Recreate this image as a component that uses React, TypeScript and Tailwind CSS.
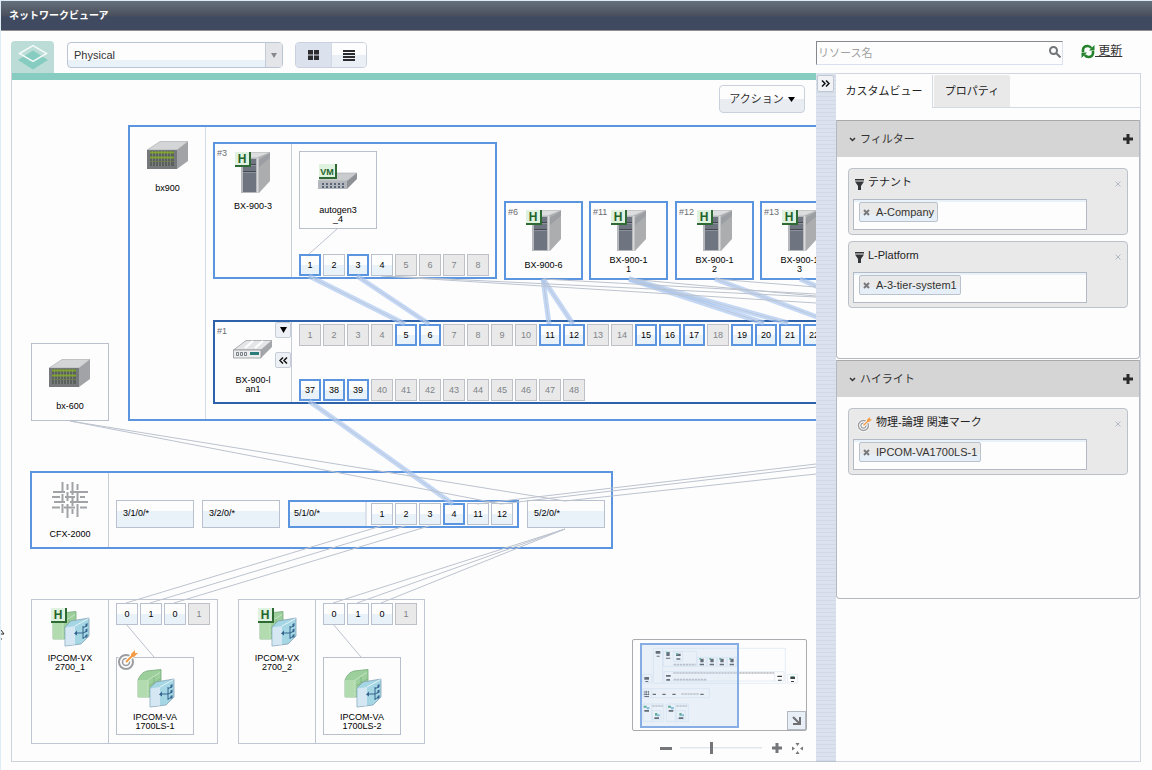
import { useState } from "react";
import type { ReactNode } from "react";
import clsx from "clsx";

type PortState = "on" | "off" | "active";

const FONT = "font-['Liberation_Sans','Noto_Sans_CJK_JP',sans-serif]";

// switch ports that carry a highlighted link
const SWITCH_ACTIVE = [5, 6, 11, 12, 15, 16, 17, 19, 20, 21, 22, 37, 38, 39];

const THIN_LINKS = [
    [325, 149, 297, 174],
    [58, 341, 489, 424],
    [58, 341, 553, 421],
    [465, 424, 804, 384],
    [489, 424, 804, 387],
    [553, 421, 804, 394],
    [369, 446, 114, 523],
    [393, 446, 138, 523],
    [417, 446, 162, 523],
    [553, 449, 321, 523],
    [553, 449, 345, 523],
    [553, 449, 369, 523],
    [114, 544, 142, 577],
    [321, 544, 349, 577],
    [373, 196, 804, 217],
    [369, 196, 804, 223],
    [531, 199, 804, 214],
    [617, 199, 804, 216],
    [703, 199, 804, 207],
];

const THICK_LINKS = [
    [297, 196, 393, 244],
    [345, 196, 417, 244],
    [531, 199, 537, 244],
    [531, 199, 561, 244],
    [617, 199, 752, 243],
    [617, 199, 776, 243],
    [703, 199, 824, 244],
    [788, 199, 850, 226],
    [297, 321, 441, 424],
];

function Badge({ text }: { text: string }) {
    const wide = text.length > 1;
    return (
        <g>
            <rect x="0" y="0" width={wide ? 18 : 16} height="15" fill="#2f6a35" />
            <rect x="0" y="0" width={wide ? 16 : 14} height="13" fill="#dff1df" />
            <text x={wide ? 8 : 7} y="11" textAnchor="middle" fontSize={wide ? 9 : 12} fontWeight="bold" fill="#1f6429">{text}</text>
        </g>
    );
}

function ChassisIcon() {
    return (
        <svg width="42" height="29" viewBox="0 0 42 29">
            <path d="M0 9 13 0.500H41L30 9Z" fill="#d3d5d7" stroke="#a4a7aa" strokeWidth="0.600" />
            <path d="M30 9 41 0.500V20L30 28Z" fill="#a1a3a6" />
            <rect x="0" y="9" width="30" height="19" fill="#75797b" />
            <rect x="3" y="10" width="24" height="15" fill="#5a615d" />
            <path d="M5.500 10v15M8.500 10v15M11.500 10v15M14.500 10v15M17.500 10v15M20.500 10v15M23.500 10v15" stroke="#888e8c" strokeWidth="0.700" />
            <path d="M3 11.500h24M3 16.500h24" stroke="#86ad25" strokeWidth="2" opacity="0.850" />
            <path d="M3 20.500h24" stroke="#6f7c52" />
        </svg>
    );
}

function TowerIcon() {
    return (
        <svg width="36" height="42" viewBox="0 0 36 42">
            <path d="M7 6 17 0.500H35L22 6Z" fill="#dcdddf" stroke="#a9abae" strokeWidth="0.600" />
            <path d="M22 6 35 0.500V29L24 41H22Z" fill="#abadaf" />
            <path d="M24 8 35 1V6L24 15Z" fill="#8c8f97" opacity="0.500" />
            <path d="M22.500 6V41" stroke="#d8d9db" strokeWidth="2" />
            <rect x="6" y="6" width="16" height="35" fill="#b6b8bb" />
            <rect x="8" y="7" width="13" height="33" fill="#6e7581" />
            <path d="M8 12.500h13M8 19.500h13" stroke="#45484e" />
            <path d="M8 13.500h13M8 20.500h13" stroke="#8b929d" />
            <Badge text="H" />
        </svg>
    );
}

function VmIcon() {
    return (
        <svg width="40" height="26" viewBox="0 0 40 26">
            <path d="M0 17 10 9H39L29 17Z" fill="#c9cbce" stroke="#a9acb0" strokeWidth="0.600" />
            <path d="M29 17 39 9V15L29 25Z" fill="#8e9196" />
            <rect x="0" y="17" width="29" height="8" fill="#b4b8bd" />
            <path d="M4 20h22M4 23h22" stroke="#3d4a63" strokeWidth="1.500" strokeDasharray="2 2" />
            <g transform="translate(1 0)"><Badge text="VM" /></g>
        </svg>
    );
}

function SwitchIcon() {
    return (
        <svg width="40" height="20" viewBox="0 0 40 20">
            <path d="M0.500 10 13 0.500H39L28 10Z" fill="#e3e5e7" stroke="#9da0a5" strokeWidth="0.800" />
            <path d="M12 8 20 1M22 8 30 1" stroke="#fff" strokeWidth="2" />
            <path d="M28 10 39 0.500V7L28 18Z" fill="#a3a6aa" />
            <path d="M0.500 10H28V18H0.500Z" fill="#eceded" stroke="#8f9398" strokeWidth="0.800" />
            <path d="M3.500 12.500h2v3h-2zM7.500 12.500h2v3h-2zM11.500 12.500h2v3h-2z" fill="none" stroke="#5d656f" strokeWidth="0.800" />
            <rect x="17" y="12" width="9" height="3" fill="#2d7c7c" />
        </svg>
    );
}

function FabricIcon() {
    return (
        <svg width="36" height="36" viewBox="0 0 36 36" fill="none" stroke="#a1a3a7" strokeWidth="2">
            <path d="M10.500 0v9M10.500 12v8M10.500 22v9M15.500 2v6M15.500 10v9M15.500 22v14M20.500 0v13M20.500 16v8M20.500 27v5M25.500 2v6M25.500 11v8M25.500 22v13" />
            <path d="M1 10h12M18 10h18M0 15h8M13 15h10M28 15h5M2 20h11M18 20h18M0 25.500h8M12 25.500h11M28 25.500h7" />
        </svg>
    );
}

function FirewallIcon({ host = false }: { host?: boolean }) {
    return (
        <svg width="39" height="40" viewBox="0 0 39 40">
            <g transform={host ? "translate(1 3)" : "translate(1 0)"}>
                <path d="M1 11C3 6 6 3 10 2L24 0.500V21L12 28H1Z" fill="#9ccf9b" stroke="#74a878" strokeWidth="0.800" />
                <path d="M1 11H11V28H1Z" fill="#b2dcb0" />
                <path d="M11 11 23 3.500M11 11V28" fill="none" stroke="#c5e5c3" />
                <path d="M12 17 23.500 10M12 22.500 23.500 16M17 8v6M19 13v5" fill="none" stroke="#79b17b" strokeWidth="0.800" />
            </g>
            <path d="M14 19 20 13 38 10V28L30 36 14 38Z" fill="#a5d6e3" stroke="#86a2b5" strokeWidth="0.800" />
            <path d="M14.500 19.500 24 18V36.500L14.500 37.500Z" fill="#d6e7f4" />
            <path d="M24 18 37.500 10.500" stroke="#e6f4fa" />
            <path d="M26 25h6M32 18v13M32 19.500l4-1.500M32 25l4-2M32 30l4-2" fill="none" stroke="#35648e" />
            <path d="M26 22.500v5l-3-2z" fill="#35648e" />
            <path d="M34.500 16l2-1v3l-2 1zM34.500 21.500l2-1v3l-2 1zM34.500 27l2-1v3l-2 1z" fill="#35648e" />
            {host && <Badge text="H" />}
        </svg>
    );
}

function TargetIcon({ className }: { className?: string }) {
    return (
        <svg className={className} viewBox="0 0 21 21" fill="none">
            <circle cx="9" cy="12" r="9" fill="#fff" />
            <circle cx="9" cy="12" r="7" stroke="#9b9da0" strokeWidth="2" />
            <circle cx="9" cy="12" r="3.500" stroke="#9b9da0" strokeWidth="1.600" />
            <path d="M9 12 17 4" stroke="#fff" strokeWidth="4" />
            <path d="M9 12 16 5" stroke="#f49b45" strokeWidth="2" />
            <path d="M14 4 18 0V3H21L17 7H14Z" fill="#f49b45" />
        </svg>
    );
}

function Port({ label, state = "on" }: { label: number; state?: PortState }) {
    return (
        <button
            className={clsx(
                "flex size-[22px] shrink-0 items-center justify-center text-[9px] leading-none",
                state === "active" && "border-2 border-[#5b94df] bg-linear-to-b from-[#fdfdfd] from-50% to-[#e9f1f9] to-50% text-black",
                state === "on" && "border border-[#b9c1ce] bg-linear-to-b from-[#fdfdfd] from-50% to-[#e9f1f9] to-50% text-black",
                state === "off" && "border border-[#bdc0c6] bg-[#e9e9e9] text-[#808388]"
            )}
        >
            {label}
        </button>
    );
}

function Label({ children }: { children: ReactNode }) {
    return <span className="text-center text-[9px] leading-[9px] whitespace-pre-line text-black">{children}</span>;
}

function Blade({ slot, name, className }: { slot: string; name: string; className: string }) {
    return (
        <div className={clsx("absolute flex size-[79px] flex-col items-center gap-1 border-2 border-[#5b94df] pt-[7px]", className)}>
            <span className="absolute top-[5px] left-[2px] text-[9px] leading-[9px] text-[#6a6d72]">{slot}</span>
            <TowerIcon />
            <div className="flex h-[18px] items-center">
                <Label>{name}</Label>
            </div>
        </div>
    );
}

function Slot({ name }: { name: string }) {
    return (
        <div className="flex h-7 w-[78px] items-center border border-[#b9c1ce] bg-linear-to-b from-[#fdfdfd] from-40% to-[#e9f1f9] to-40% pl-1.5 text-[9px] text-black">
            {name}
        </div>
    );
}

function Ipcom({ host, guest, marked, className }: { host: string; guest: string; marked?: boolean; className: string }) {
    return (
        <div className={clsx("absolute flex h-[145px] w-[187px] border border-[#c0c7d3]", className)}>
            <div className="flex w-[77px] flex-col items-center gap-1.5 border-r border-[#c0c7d3] pt-2">
                <FirewallIcon host />
                <Label>{host}</Label>
            </div>
            <div className="flex flex-col gap-8 pt-[3px] pl-[7px]">
                <div className="flex gap-0.5">
                    <Port label={0} />
                    <Port label={1} />
                    <Port label={0} />
                    <Port label={1} state="off" />
                </div>
                <div className="relative flex size-[78px] flex-col items-center gap-1 border border-[#b9c0cb] pt-[11px]">
                    {marked && <TargetIcon className="absolute -top-2 left-0 size-[21px]" />}
                    <FirewallIcon />
                    <Label>{guest}</Label>
                </div>
            </div>
        </div>
    );
}

function Minimap() {
    const blades = [232, 262, 292, 322];
    return (
        <div className="relative h-[92px] w-[175px] rounded-xs border border-[#a9abae] bg-[#fdfdfd]">
            <svg className="block size-full" viewBox="39 30 519 270">
                <g fill="none" stroke="#dbe6f1" strokeWidth="2">
                    <path d="M100 55h396v105H100zM128 55v105M130 64h100v45H130zM132 125h360v28H132zM464 125v28M69 133h26v26H69zM502 133h30v26h-30zM69 176h199v27H69zM95 176v27M69 222h62v52H69zM95 222v52M139 222h66v52h-66zM166 222v52M97 242h26v26H97zM170 242h26v26h-26zM160 66h28v28h-28z" />
                    {blades.map((x) => <path key={x} d={`M${x} 82h27v27h-27z`} />)}
                </g>
                <g stroke="#9a9da3" strokeWidth="5" strokeDasharray="7 2">
                    <path d="M161 104h66M160 129h302M161 149h100M184 192h52M97 228h32M169 228h32" opacity="0.700" />
                </g>
                <g fill="#3f444a">
                    <path d="M107 63h14v8h-14zM110 77h9v3h-9zM139 66h10v12h-10zM138 83h13v3h-13zM168 71h14v7h-14zM169 85h12v4h-12zM138 135h14v5h-14zM139 147h11v5h-11zM73 141h14v8H73zM76 153h9v3h-9zM472 137h14v4h-14zM474 149h11v3h-11zM511 140h14v7h-14zM513 153h9v3h-9z" />
                    <path d="M74 182h2v14h-2zM79 182h2v14h-2zM84 182h2v14h-2zM71 185h17v2H71zM71 192h17v2H71zM73 198h14v3H73zM98 191h10v4H98zM127 191h10v4h-10zM157 191h10v4h-10zM241 191h10v4h-10z" />
                    <path d="M73 240h14v5H73zM146 240h14v5h-14zM103 262h14v5h-14zM176 262h14v5h-14z" />
                    {blades.map((x) => <path key={x} d={`M${x + 9} 86h10v11h-10zM${x + 7} 101h13v5h-13z`} />)}
                </g>
                <g fill="#3c9d77">
                    <path d="M71 227h9v6h-9zM144 227h9v6h-9zM138 65h5v5h-5zM168 70h6v5h-6zM105 249h7v8h-7zM178 249h7v8h-7zM512 138h11v2h-11z" />
                    {blades.map((x) => <path key={x} d={`M${x + 6} 84h5v5h-5z`} />)}
                </g>
                <path d="M80 231h8v7h-8zM153 231h8v7h-8zM111 253h8v6h-8zM184 253h8v6h-8z" fill="#6ab3cd" />
            </svg>
            <div className="absolute top-[3px] left-[7px] h-[85px] w-[99px] border-2 border-[#86aee4] bg-[#bcd3f0]/30" />
            <button aria-label="minimap" className="absolute right-0 bottom-0 flex size-[19px] items-center justify-center border border-[#b5bac2] bg-[#e9eff6]">
                <svg width="9" height="9" viewBox="0 0 9 9" fill="none" stroke="#6e7073" strokeWidth="2"><path d="M1 1 7 7M8 1V8H1" /></svg>
            </button>
        </div>
    );
}

function FunnelIcon() {
    return (
        <svg width="9" height="11" viewBox="0 0 9 11" fill="#343638">
            <path d="M0 0h9v1.500H0zM0 2.500h9L6 7v4H3V7z" />
        </svg>
    );
}

function PlusIcon({ className }: { className?: string }) {
    return <svg className={className} width="10" height="10" viewBox="0 0 10 10"><path d="M5 0v10M0 5h10" stroke="currentColor" strokeWidth="3" /></svg>;
}

function FilterCard({ id, icon, title, tag }: { id: string; icon: ReactNode; title: string; tag: string }) {
    return (
        <div className="h-[67px] rounded-sm border border-[#bcc1c9] bg-[#e9e9e9] pl-1">
            <div className="flex h-[30px] items-center gap-1 pr-1 pl-0.5">
                {icon}
                <label htmlFor={id} className="-mt-1 text-[11px] text-[#222]">{title}</label>
                <button aria-label="close" className="mr-0.5 ml-auto">
                    <svg width="6" height="6" viewBox="0 0 6 6" stroke="#b3b9c4"><path d="M0.500 0.500 5.500 5.500M5.500 0.500 0.500 5.500" /></svg>
                </button>
            </div>
            <div className="flex h-[31px] w-[234px] items-start border border-[#b3bac6] bg-[#fdfdfd] px-[5px] pt-0.5 shadow-[inset_0_2px_#e9f1f9]">
                <span className="flex h-5 shrink-0 items-center gap-1.5 rounded-xs border border-[#bac2cd] bg-linear-to-b from-[#e9e9e9] from-60% to-[#e6eff7] to-60% px-[3px] text-[11px] text-[#333]">
                    <button aria-label="remove">
                        <svg width="7" height="7" viewBox="0 0 7 7" stroke="#77797c" strokeWidth="2"><path d="M1 1 6 6M6 1 1 6" /></svg>
                    </button>
                    {tag}
                </span>
                <input id={id} className="h-5 min-w-0 flex-1 bg-transparent text-[11px] outline-none" />
            </div>
        </div>
    );
}

function PanelHeader({ title }: { title: string }) {
    return (
        <div className="flex h-[37px] items-center gap-1 border-t border-[#a9a9a9] bg-[#d5d5d5] pr-1.5 pl-3 text-[11px] text-[#333]">
            <svg width="7" height="5" viewBox="0 0 7 5" fill="none" stroke="#333" strokeWidth="1.500"><path d="M1 1 3.500 3.500 6 1" /></svg>
            <h2>{title}</h2>
            <button aria-label="add" className="ml-auto"><PlusIcon className="text-[#2b2b2b]" /></button>
        </div>
    );
}

export default function App() {
    const [view, setView] = useState("Physical");
    const [zoom, setZoom] = useState(38);

    return (
        <div className={clsx("relative flex min-h-screen flex-col overflow-hidden border-t border-l border-[#deedf5] bg-[#fdfdfd] pb-2 text-[#333]", FONT)}>
            <header className="flex h-[30px] items-center border-b border-[#8f8d8d] bg-linear-to-b from-[#66717e] via-[#4a505c] via-50% to-[#3f4a61] to-55% px-2">
                <h1 className="text-[10px] font-bold text-white">ネットワークビューア</h1>
            </header>

            <div className="flex h-[42px] pr-[11px] pl-2.5">
                <div className="mt-2.5 flex w-[43px] items-center justify-center rounded-t bg-[#bcddd7]">
                    <svg width="32" height="26" viewBox="0 0 32 26">
                        <path d="M1 16 16 6.500 31 16 16 25.500Z" fill="#86ccc1" />
                        <path d="M2.500 9.500 16 1.500 29.500 9.500 16 17.500Z" fill="none" stroke="#f2faf8" strokeWidth="1.500" />
                    </svg>
                </div>
                <div className="relative mt-[11px] ml-[13px] h-[26px] w-[216px]">
                    <select
                        aria-label="view"
                        value={view}
                        onChange={(e) => setView(e.target.value)}
                        className="size-full appearance-none rounded-sm border border-[#bbc4d3] bg-linear-to-b from-[#fdfdfd] from-70% to-[#e9f1f9] to-70% px-1.5 text-[11px] text-[#333]"
                    >
                        <option>Physical</option>
                        <option>Logical</option>
                    </select>
                    <span className="pointer-events-none absolute inset-y-px right-px flex w-[17px] items-center justify-center border-l border-[#c5ccd9] bg-[#e3e5e9]">
                        <svg width="6" height="5" viewBox="0 0 6 5" fill="#85888d"><path d="M0 0h6L3 5z" /></svg>
                    </span>
                </div>
                <div className="mt-[11px] ml-3 flex h-[26px] w-[72px] overflow-hidden rounded-sm border border-[#c9d1de]">
                    <button aria-label="map" className="flex flex-1 items-center justify-center bg-[#dbe2ed]">
                        <svg width="11" height="10" viewBox="0 0 11 10" fill="#2c2c2e"><path d="M0 0h5v4.500H0zM6 0h5v4.500H6zM0 5.500h5V10H0zM6 5.500h5V10H6z" /></svg>
                    </button>
                    <button aria-label="list" className="flex flex-1 items-center justify-center border-l border-[#d3dae5] bg-linear-to-b from-[#fdfdfd] from-50% to-[#e9eff5] to-50%">
                        <svg width="12" height="11" viewBox="0 0 12 11" fill="#2c2c2e"><path d="M0 0h12v2H0zM0 3h12v2H0zM0 6h12v2H0zM0 9h12v2H0z" /></svg>
                    </button>
                </div>
                <div className="ml-auto flex w-[325px] items-start">
                    <div className="relative mt-[9px] h-6 w-[247px]">
                        <input
                            aria-label="search"
                            placeholder="リソース名"
                            className="size-full border border-[#d9e1f0] border-t-[#85898f] border-l-[#85898f] bg-[#fdfdfd] pr-6 pl-px text-[11px] outline-none placeholder:text-[#a0a0a0]"
                        />
                        <svg className="absolute top-1.5 right-0.5" width="12" height="12" viewBox="0 0 12 12" fill="none" stroke="#717478" strokeWidth="2"><circle cx="4.500" cy="4.500" r="3.500" /><path d="m7 7 4.500 4.500" /></svg>
                    </div>
                    <a href="#" className="mt-3 ml-[18px] flex items-center text-[12px] leading-4 text-[#333] underline">
                        <svg width="14" height="15" viewBox="0 0 14 15" fill="none" stroke="#23822b" strokeWidth="2.600">
                            <path d="M2 8V6C2 3.500 4 2 6.500 2c1.800 0 2.800.700 3.800 2" />
                            <path d="M12 7v2c0 2.500-2 4-4.500 4-1.800 0-2.800-.700-3.800-2" />
                            <path d="M8 6.500h5.500V1z M6 8.500H0.500V14z" fill="#23822b" stroke="none" />
                        </svg>
                        <span>&nbsp;更新</span>
                    </a>
                </div>
            </div>

            <main className="flex flex-1 pr-[11px] pl-2.5">
                <section className="relative min-h-[680px] min-w-0 flex-1 overflow-hidden border-b border-l border-[#ced2d9]">
                    <div className="h-[7px] bg-[#86ccc1]" />
                    <div className="absolute inset-x-0 top-[7px] bottom-0">
                        <div className="absolute top-[45px] left-[116px] flex h-[296px] w-[1100px] border-2 border-[#5b94df]">
                            <div className="flex w-[76px] flex-col items-center gap-3.5 border-r border-[#d3dbe6] pt-3.5">
                                <ChassisIcon />
                                <Label>bx900</Label>
                            </div>
                        </div>

                        <div className="absolute top-[62px] left-[201px] flex h-[137px] w-[284px] border-2 border-[#5b94df]">
                            <div className="relative flex w-[77px] flex-col items-center gap-2 border-r border-[#c6cdd9] pt-2">
                                <span className="absolute top-[5px] left-[2px] text-[9px] leading-[9px] text-[#6a6d72]">#3</span>
                                <TowerIcon />
                                <Label>BX-900-3</Label>
                            </div>
                            <div className="flex flex-col justify-between pt-[7px] pb-px pl-[7px]">
                                <div className="flex size-[78px] flex-col items-center gap-4 border border-[#b9c0cb] pt-3">
                                    <VmIcon />
                                    <Label>{"autogen3\n_4"}</Label>
                                </div>
                                <div className="flex gap-0.5">
                                    {[1, 2, 3, 4, 5, 6, 7, 8].map((n) => (
                                        <Port key={n} label={n} state={n > 4 ? "off" : n % 2 ? "active" : "on"} />
                                    ))}
                                </div>
                            </div>
                        </div>

                        <Blade slot="#6" name="BX-900-6" className="top-[121px] left-[492px]" />
                        <Blade slot="#11" name={"BX-900-1\n1"} className="top-[121px] left-[577px]" />
                        <Blade slot="#12" name={"BX-900-1\n2"} className="top-[121px] left-[663px]" />
                        <Blade slot="#13" name={"BX-900-1\n3"} className="top-[121px] left-[748px]" />

                        <div className="absolute top-[240px] left-[201px] flex h-[84px] w-[1000px] border-2 border-[#2d61aa]">
                            <div className="relative flex w-[77px] shrink-0 flex-col items-center gap-4 border-r border-[#c6cdd9] pt-[18px]">
                                <span className="absolute top-[5px] left-[2px] text-[9px] leading-[9px] text-[#6a6d72]">#1</span>
                                <SwitchIcon />
                                <Label>{"BX-900-l\nan1"}</Label>
                                <div className="absolute inset-y-0 right-0 flex flex-col gap-3.5">
                                    <button aria-label="menu" className="flex size-4 items-center justify-center rounded-xs border border-[#c6cdd9] bg-[#edf0f4]">
                                        <svg width="7" height="6" viewBox="0 0 7 6"><path d="M0 0h7L3.500 6z" /></svg>
                                    </button>
                                    <button aria-label="collapse" className="flex size-4 items-center justify-center rounded-xs border border-[#c6cdd9] bg-[#edf0f4]">
                                        <svg width="9" height="7" viewBox="0 0 9 7" fill="none" stroke="#111" strokeWidth="1.500"><path d="M4 0.500 1 3.500 4 6.500M8 0.500 5 3.500 8 6.500" /></svg>
                                    </button>
                                </div>
                            </div>
                            <div className="flex flex-col justify-between pt-0.5 pb-px pl-[7px]">
                                <div className="flex gap-0.5">
                                    {Array.from({ length: 22 }, (_, i) => i + 1).map((n) => (
                                        <Port key={n} label={n} state={SWITCH_ACTIVE.includes(n) ? "active" : "off"} />
                                    ))}
                                </div>
                                <div className="flex gap-0.5">
                                    {[37, 38, 39, 40, 41, 42, 43, 44, 45, 46, 47, 48].map((n) => (
                                        <Port key={n} label={n} state={SWITCH_ACTIVE.includes(n) ? "active" : "off"} />
                                    ))}
                                </div>
                            </div>
                        </div>

                        <div className="absolute top-[263px] left-[19px] flex size-[78px] flex-col items-center gap-3.5 border border-[#b9c0cb] pt-[15px]">
                            <ChassisIcon />
                            <Label>bx-600</Label>
                        </div>

                        <div className="absolute top-[391px] left-[18px] flex h-[78px] w-[583px] border-2 border-[#5b94df]">
                            <div className="flex w-[77px] shrink-0 flex-col items-center gap-3 border-r border-[#c6cdd9] pt-[9px]">
                                <FabricIcon />
                                <Label>CFX-2000</Label>
                            </div>
                            <div className="flex items-center gap-2 pt-2 pl-[7px]">
                                <Slot name="3/1/0/*" />
                                <Slot name="3/2/0/*" />
                                <div className="flex h-7 w-[231px] items-center border-2 border-[#5b94df]">
                                    <div className="mr-1 flex h-full w-[77px] items-center border-r-2 border-[#dbe2ec] bg-linear-to-b from-[#fdfdfd] from-40% to-[#e9f1f9] to-40% pl-1 text-[9px] text-black">5/1/0/*</div>
                                    <div className="flex gap-0.5">
                                        {[1, 2, 3, 4, 11, 12].map((n) => (
                                            <Port key={n} label={n} state={n === 4 ? "active" : "on"} />
                                        ))}
                                    </div>
                                </div>
                                <Slot name="5/2/0/*" />
                            </div>
                        </div>

                        <Ipcom host={"IPCOM-VX\n2700_1"} guest={"IPCOM-VA\n1700LS-1"} marked className="top-[519px] left-[19px]" />
                        <Ipcom host={"IPCOM-VX\n2700_2"} guest={"IPCOM-VA\n1700LS-2"} className="top-[519px] left-[226px]" />

                        <svg className="pointer-events-none absolute inset-0 size-full">
                            {THICK_LINKS.map(([x1, y1, x2, y2], i) => (
                                <g key={i}>
                                    <line x1={x1} y1={y1} x2={x2} y2={y2} stroke="#a6c5f1" strokeWidth="5" opacity="0.650" />
                                    <line x1={x1} y1={y1} x2={x2} y2={y2} stroke="#bcc8da" strokeWidth="1" />
                                </g>
                            ))}
                            {THIN_LINKS.map(([x1, y1, x2, y2], i) => (
                                <line key={i} x1={x1} y1={y1} x2={x2} y2={y2} stroke="#bcc3ce" strokeWidth="1" />
                            ))}
                        </svg>

                        <button className="absolute top-[5px] right-[11px] flex h-7 w-[86px] items-center justify-center gap-1 rounded-sm border border-[#c9d1dd] bg-linear-to-b from-[#fdfdfd] from-50% to-[#e9edf2] to-50% text-[11px]">
                            アクション
                            <svg width="7" height="5" viewBox="0 0 7 5"><path d="M0 0h7L3.500 5z" /></svg>
                        </button>

                        <div className="absolute right-[9px] bottom-0">
                            <Minimap />
                            <div className="flex h-[30px] items-center gap-2 pt-1 pr-1 pl-7 text-[#747679]">
                                <button aria-label="zoom out" className="h-[3px] w-3 shrink-0 bg-[#747679]" />
                                <input
                                    type="range"
                                    aria-label="zoom"
                                    value={zoom}
                                    onChange={(e) => setZoom(Number(e.target.value))}
                                    className="h-3 w-[82px] min-w-0 appearance-none bg-linear-to-b from-transparent from-40% via-[#d5dbe5] via-40% to-transparent to-60% [&::-webkit-slider-thumb]:h-3 [&::-webkit-slider-thumb]:w-[3px] [&::-webkit-slider-thumb]:appearance-none [&::-webkit-slider-thumb]:bg-[#747679]"
                                />
                                <button aria-label="zoom in" className="ml-0.5"><PlusIcon /></button>
                                <button aria-label="fit" className="ml-0.5">
                                    <svg width="11" height="11" viewBox="0 0 11 11" fill="currentColor"><path d="M3.500 0h4l-2 3zM3.500 11h4l-2-3zM0 3.500v4l3-2zM11 3.500v4l-3-2z" /></svg>
                                </button>
                            </div>
                        </div>
                    </div>
                </section>

                <div className="w-5 shrink-0 border-b border-[#bcc3cf] bg-[repeating-linear-gradient(#dbe2ed_0_3px,#d0d9e6_3px_4px)] px-px pt-0.5">
                    <button aria-label="toggle panel" className="flex size-[17px] items-center justify-center rounded-xs border border-[#c1c8d3] bg-[#f0f2f5]">
                        <svg width="9" height="7" viewBox="0 0 9 7" fill="none" stroke="#111" strokeWidth="1.500"><path d="M1 0.500 4 3.500 1 6.500M5 0.500 8 3.500 5 6.500" /></svg>
                    </button>
                </div>

                <aside className="w-[305px] shrink-0 border-t border-r border-b border-[#cfd6e2]">
                    <div className="flex h-[34px] border-b border-[#d3dae5] pt-px">
                        <button className="h-[33px] w-[97px] border-r border-[#d3dae5] bg-[#fdfdfd] text-[11px] text-[#222]">カスタムビュー</button>
                        <button className="ml-px h-[32px] w-[76px] rounded-t-xs bg-[#e9e9e9] text-[11px] text-[#222]">プロパティ</button>
                    </div>
                    <div className="mt-3 h-[239px] rounded-b-sm border-x border-b border-[#b4b9c1]">
                        <PanelHeader title="フィルター" />
                        <div className="flex flex-col gap-1.5 px-[11px] py-[11px]">
                            <FilterCard id="tenant" icon={<FunnelIcon />} title="テナント" tag="A-Company" />
                            <FilterCard id="platform" icon={<FunnelIcon />} title="L-Platform" tag="A-3-tier-system1" />
                        </div>
                    </div>
                    <div className="mt-px h-[239px] rounded-b-sm border-x border-b border-[#b4b9c1]">
                        <PanelHeader title="ハイライト" />
                        <div className="px-[11px] py-[11px]">
                            <FilterCard id="mark" icon={<TargetIcon className="ml-0.5 size-[15px]" />} title="物理-論理 関連マーク" tag="IPCOM-VA1700LS-1" />
                        </div>
                    </div>
                </aside>
            </main>

            {/* pointer leaving the window on the left edge */}
            <svg className="absolute top-[628px] left-0" width="4" height="12" viewBox="0 0 4 12" fill="none" stroke="#222"><path d="M0 1 3 5H0M0 10h1" /></svg>
        </div>
    );
}
